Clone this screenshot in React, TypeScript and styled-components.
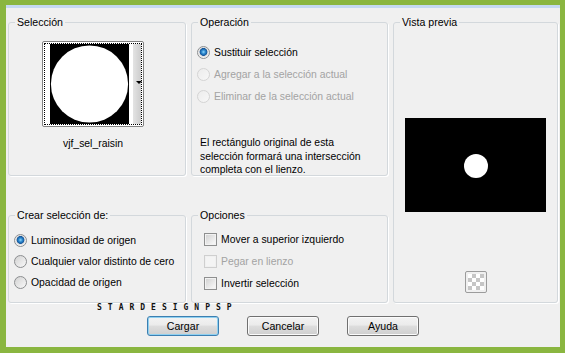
import React from 'react';
import styled, { createGlobalStyle } from 'styled-components';

const GlobalStyle = createGlobalStyle`
  html, body {
    margin: 0;
    padding: 0;
  }
  body {
    font-family: 'Liberation Sans', Arial, sans-serif;
    font-size: 10.4px;
    color: #000;
  }
`;

const Frame = styled.div`
  width: 565px;
  height: 353px;
  box-sizing: border-box;
  background: #8ab640;
  padding: 5px 5px 6px 6px;
`;

const Window = styled.div`
  height: 100%;
  box-sizing: border-box;
  background: #f0f0f0;
  border-top: 3px solid #c5d9f1;
  padding: 8px 0 0 2px;
  display: flex;
  flex-direction: column;
`;

const Panels = styled.div`
  display: grid;
  grid-template-columns: 178px 197px 165px;
  grid-template-rows: 160px 94px;
  column-gap: 5px;
  row-gap: 33px;
`;

const Group = styled.fieldset<{ $col: number; $row: string }>`
  margin: 0;
  padding: 0;
  min-width: 0;
  border: 1px solid #d3d8dc;
  border-radius: 3px;
  box-shadow: 1px 1px 0 #fff;
  display: flex;
  flex-direction: column;
  grid-column: ${(p) => p.$col};
  grid-row: ${(p) => p.$row};
`;

const Legend = styled.legend`
  margin-left: 6px;
  padding: 0 2px;
  font-size: 10.6px;
  line-height: 13px;
`;

/* ---- Selección thumbnail ---- */

const ThumbColumn = styled.div`
  margin: 12px 0 0 33px;
  width: 102px;
  display: flex;
  flex-direction: column;
  align-items: center;
`;

const Thumb = styled.div`
  position: relative;
  width: 102px;
  height: 86px;
  box-sizing: border-box;
  border: 1px solid #828282;
  border-radius: 2px;
  background: #fff;
  padding: 1px;
`;

const Focus = styled.div`
  height: 100%;
  box-sizing: border-box;
  border: 1px dotted #000;
  display: flex;
  padding-left: 5px;
  gap: 4px;
`;

const ScrollStrip = styled.div`
  width: 8px;
  background: linear-gradient(to right, #e4e4e4, #cdcdcd);
`;

const DropArrow = styled.span`
  position: absolute;
  right: 1px;
  top: 39px;
  width: 0;
  height: 0;
  border-left: 3px solid transparent;
  border-right: 3px solid transparent;
  border-top: 3px solid #000;
`;

const ThumbLabel = styled.div`
  margin-top: 10px;
  line-height: 13px;
`;

/* ---- options ---- */

const OptionList = styled.div<{ $pad: string }>`
  padding: ${(p) => p.$pad};
  display: flex;
  flex-direction: column;
`;

const Option = styled.label<{ $h: number; $disabled?: boolean }>`
  display: flex;
  align-items: center;
  gap: 4px;
  height: ${(p) => p.$h}px;
  color: ${(p) => (p.$disabled ? '#a3a3a3' : '#000')};
  white-space: nowrap;
`;

const Radio = styled.span<{ $checked?: boolean; $disabled?: boolean }>`
  flex-shrink: 0;
  width: 13px;
  height: 13px;
  box-sizing: border-box;
  border-radius: 50%;
  border: 1px solid ${(p) => (p.$disabled ? '#d4d4d4' : '#8c8e90')};
  background: ${(p) =>
    p.$checked
      ? 'radial-gradient(circle at 50% 45%, #8fd6fb 0, #2a86cc 2px, #16569a 3.6px, #dcdcdc 4.2px, #fafafa 6px)'
      : p.$disabled
      ? 'linear-gradient(135deg, #ececec, #f7f7f7)'
      : 'linear-gradient(135deg, #d2d2d2, #f9f9f9)'};
`;

const Check = styled.span<{ $disabled?: boolean }>`
  flex-shrink: 0;
  width: 13px;
  height: 13px;
  box-sizing: border-box;
  border: 1px solid ${(p) => (p.$disabled ? '#cfcfcf' : '#8e8f8f')};
  background: ${(p) =>
    p.$disabled ? '#f4f4f4' : 'linear-gradient(135deg, #cfcfcf, #f4f4f4 80%)'};
  box-shadow: inset 0 0 0 1px ${(p) => (p.$disabled ? '#f0f0f0' : '#f2f2f2')};
`;

const Description = styled.p`
  margin: 29px 0 0 8px;
  line-height: 13.5px;
  white-space: nowrap;
`;

/* ---- preview ---- */

const PreviewBody = styled.div`
  display: flex;
  flex-direction: column;
  align-items: center;
  padding-top: 89px;
`;

const Checker = styled.div`
  margin-top: 59px;
  width: 22px;
  height: 22px;
  box-sizing: border-box;
  border: 1px solid #9c9c9c;
  border-radius: 2px;
  padding: 2px;
  background-color: #fff;
  background-image: conic-gradient(#c6c6c6 25%, #fff 0 50%, #c6c6c6 0 75%, #fff 0);
  background-size: 8px 8px;
  background-position: 2px 2px;
  background-clip: content-box;
`;

/* ---- footer ---- */

const Watermark = styled.div`
  padding-left: 89px;
  height: 8px;
  margin-top: 1px;
  font-family: 'DejaVu Sans Mono', monospace;
  font-size: 8px;
  font-weight: bold;
  line-height: 8px;
  letter-spacing: 6px;
  color: #111;
`;

const ButtonRow = styled.div`
  display: flex;
  gap: 28px;
  padding-left: 139px;
  margin-top: 4px;
`;

const Button = styled.button<{ $default?: boolean }>`
  width: 72px;
  height: 20px;
  padding: 0;
  font-family: 'Liberation Sans', Arial, sans-serif;
  font-size: 10.6px;
  color: #000;
  border: 1px solid ${(p) => (p.$default ? '#3c7fb1' : '#707070')};
  border-radius: 3px;
  background: linear-gradient(to bottom, #f3f3f3 0%, #ebebeb 45%, #dddddd 50%, #cfcfcf 100%);
  box-shadow: inset 0 0 0 1px ${(p) => (p.$default ? '#8fd0f0' : '#fbfbfb')};
`;

const App: React.FC = () => {
  return (
    <>
      <GlobalStyle />
      <Frame>
        <Window>
          <Panels>
            <Group $col={1} $row="1">
              <Legend>Selección</Legend>
              <ThumbColumn>
                <Thumb>
                  <Focus>
                    <svg width="79" height="80" viewBox="0 0 79 80">
                      <rect width="79" height="80" fill="#000" />
                      <circle cx="39.5" cy="40" r="38.6" fill="#fff" />
                    </svg>
                    <ScrollStrip />
                  </Focus>
                  <DropArrow />
                </Thumb>
                <ThumbLabel>vjf_sel_raisin</ThumbLabel>
              </ThumbColumn>
            </Group>

            <Group $col={2} $row="1">
              <Legend>Operación</Legend>
              <OptionList $pad="12px 0 0 5px">
                <Option $h={22}>
                  <Radio $checked />
                  Sustituir selección
                </Option>
                <Option $h={22} $disabled>
                  <Radio $disabled />
                  Agregar a la selección actual
                </Option>
                <Option $h={22} $disabled>
                  <Radio $disabled />
                  Eliminar de la selección actual
                </Option>
              </OptionList>
              <Description>
                El rectángulo original de esta
                <br />
                selección formará una intersección
                <br />
                completa con el lienzo.
              </Description>
            </Group>

            <Group $col={3} $row="1 / span 2">
              <Legend>Vista previa</Legend>
              <PreviewBody>
                <svg width="141" height="94" viewBox="0 0 141 94">
                  <rect width="141" height="94" fill="#000" />
                  <circle cx="71" cy="48" r="12" fill="#fff" />
                </svg>
                <Checker />
              </PreviewBody>
            </Group>

            <Group $col={1} $row="2">
              <Legend>Crear selección de:</Legend>
              <OptionList $pad="8px 0 0 5px">
                <Option $h={21}>
                  <Radio $checked />
                  Luminosidad de origen
                </Option>
                <Option $h={21}>
                  <Radio />
                  Cualquier valor distinto de cero
                </Option>
                <Option $h={21}>
                  <Radio />
                  Opacidad de origen
                </Option>
              </OptionList>
            </Group>

            <Group $col={2} $row="2">
              <Legend>Opciones</Legend>
              <OptionList $pad="6px 0 0 12px">
                <Option $h={22}>
                  <Check />
                  Mover a superior izquierdo
                </Option>
                <Option $h={22} $disabled>
                  <Check $disabled />
                  Pegar en lienzo
                </Option>
                <Option $h={22}>
                  <Check />
                  Invertir selección
                </Option>
              </OptionList>
            </Group>
          </Panels>

          <Watermark>STARDESIGNPSP</Watermark>

          <ButtonRow>
            <Button $default>Cargar</Button>
            <Button>Cancelar</Button>
            <Button>Ayuda</Button>
          </ButtonRow>
        </Window>
      </Frame>
    </>
  );
};

export default App;
